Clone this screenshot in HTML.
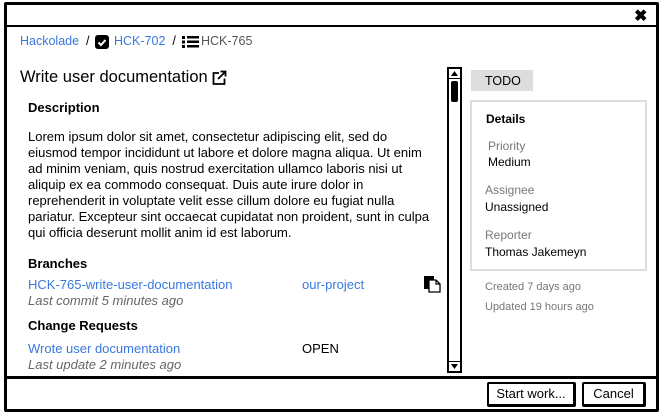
<!DOCTYPE html>
<html><head><meta charset="utf-8"><style>
*{margin:0;padding:0;box-sizing:border-box}
body{width:661px;height:415px;background:#fff;position:relative;overflow:hidden;font-family:"Liberation Sans",sans-serif;font-size:12px;color:#000}
.a{position:absolute;white-space:nowrap}
.blue{color:#3878e0}
.gray{color:#777}
.it{font-style:italic;color:#666}
.b{font-weight:bold}
.m{font-size:13px}
.btn{position:absolute;border:2px solid #000;border-right-width:3px;border-bottom-width:3px;border-radius:2px;background:#fff;text-align:center;font-size:13px;line-height:20px}
</style></head><body>
<div class="a" style="left:4px;top:2px;width:655px;height:410px;border:3px solid #000;border-radius:2px"></div>
<div class="a" style="left:5px;top:25px;width:652px;height:2px;background:#000"></div>
<div class="a" style="left:5px;top:376px;width:652px;height:3px;background:#000"></div>
<div class="a b" style="left:634px;top:6px;font-size:16px">✖</div>

<div class="a" style="left:20px;top:34px;font-size:12.5px"><span class="blue">Hackolade</span>&nbsp; / </div>
<div class="a" style="left:95px;top:35px;width:14px;height:14px;background:#000;border-radius:3px"><svg width="14" height="14"><path d="M3.5 7.5l2.5 2.5 4.5-5" stroke="#fff" stroke-width="2" fill="none"/></svg></div>
<div class="a" style="left:114px;top:34px;font-size:12.5px"><span class="blue">HCK-702</span>&nbsp; / </div>
<svg class="a" style="left:182px;top:36px" width="17" height="12"><rect x="0" y="0" width="3" height="3"/><rect x="0" y="4.5" width="3" height="3"/><rect x="0" y="9" width="3" height="3"/><rect x="5" y="0" width="12" height="2.5"/><rect x="5" y="4.5" width="12" height="2.5"/><rect x="5" y="9" width="12" height="2.5"/></svg>
<div class="a" style="left:201px;top:34px;font-size:12.5px;color:#555">HCK-765</div>

<div class="a" style="left:20px;top:68px;font-size:16.5px">Write user documentation</div>
<svg class="a" style="left:211px;top:70px" width="16" height="16"><path d="M8 3H2.5v11h11V8.5" stroke="#000" stroke-width="1.8" fill="none"/><path d="M7 9l7-7M9.5 1.5h5v5" stroke="#000" stroke-width="1.8" fill="none"/></svg>

<div class="a b m" style="left:28px;top:100px">Description</div>
<div class="a m" style="left:28px;top:129px;line-height:16px;white-space:normal;width:420px">Lorem ipsum dolor sit amet, consectetur adipiscing elit, sed do<br>eiusmod tempor incididunt ut labore et dolore magna aliqua. Ut enim<br>ad minim veniam, quis nostrud exercitation ullamco laboris nisi ut<br>aliquip ex ea commodo consequat. Duis aute irure dolor in<br>reprehenderit in voluptate velit esse cillum dolore eu fugiat nulla<br>pariatur. Excepteur sint occaecat cupidatat non proident, sunt in culpa<br>qui officia deserunt mollit anim id est laborum.</div>

<div class="a b m" style="left:28px;top:256px">Branches</div>
<div class="a blue m" style="left:28px;top:277px">HCK-765-write-user-documentation</div>
<div class="a blue m" style="left:302px;top:277px">our-project</div>
<svg class="a" style="left:424px;top:276px" width="17" height="17"><rect x="0" y="0" width="10" height="13" fill="#000"/><path d="M5 4h7l4 4v8H5z" fill="#fff" stroke="#000" stroke-width="1.3"/><path d="M12 4v4h4" fill="none" stroke="#000" stroke-width="1.2"/></svg>
<div class="a it m" style="left:28px;top:293px">Last commit 5 minutes ago</div>
<div class="a b m" style="left:28px;top:318px">Change Requests</div>
<div class="a blue m" style="left:28px;top:341px">Wrote user documentation</div>
<div class="a m" style="left:302px;top:341px">OPEN</div>
<div class="a it m" style="left:28px;top:357px">Last update 2 minutes ago</div>

<div class="a" style="left:447px;top:67px;width:15px;height:306px;border:2px solid #000;background:#fff"></div>
<svg class="a" style="left:449px;top:69px" width="11" height="10"><path d="M2 7h7L5.5 2z" fill="#000"/><path d="M0 9.5h11" stroke="#000"/></svg>
<div class="a" style="left:451px;top:81px;width:7px;height:21px;background:#000;border-radius:2px"></div>
<svg class="a" style="left:449px;top:361px" width="11" height="10"><path d="M2 3h7L5.5 8z" fill="#000"/><path d="M0 0.5h11" stroke="#000"/></svg>

<div class="a" style="left:471px;top:70px;width:62px;height:21px;background:#ddd"></div>
<div class="a" style="left:485px;top:74px;font-size:12.5px">TODO</div>
<div class="a" style="left:470px;top:100px;width:177px;height:171px;border:2px solid #ddd"></div>
<div class="a b" style="left:486px;top:112px">Details</div>
<div class="a gray" style="left:488px;top:139px">Priority</div>
<div class="a" style="left:488px;top:155px">Medium</div>
<div class="a gray" style="left:485px;top:183px">Assignee</div>
<div class="a" style="left:485px;top:200px">Unassigned</div>
<div class="a gray" style="left:485px;top:228px">Reporter</div>
<div class="a" style="left:485px;top:245px">Thomas Jakemeyn</div>
<div class="a gray" style="left:485px;top:281px;font-size:11px">Created 7 days ago</div>
<div class="a gray" style="left:485px;top:301px;font-size:11px">Updated 19 hours ago</div>

<div class="btn" style="left:487px;top:382px;width:89px;height:25px">Start work...</div>
<div class="btn" style="left:582px;top:382px;width:64px;height:25px">Cancel</div>
</body></html>
